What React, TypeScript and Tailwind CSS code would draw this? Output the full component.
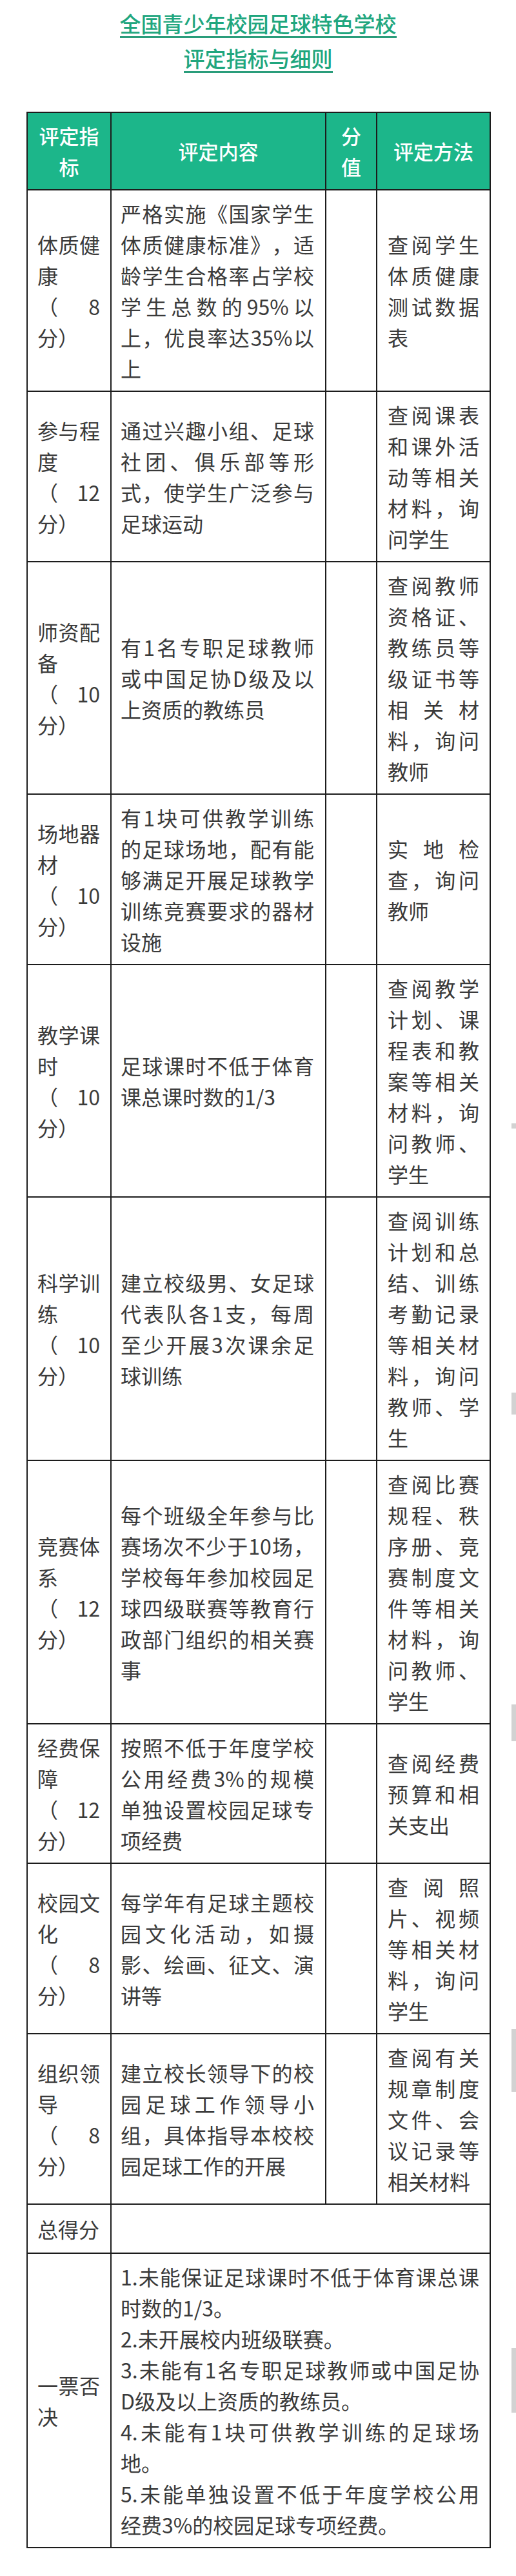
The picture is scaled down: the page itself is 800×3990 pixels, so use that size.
import React from "react";

type Row = { name: string; score: string; content: string; method: string };

const rows: Row[] = [
  {
    name: "体质健康",
    score: "（8分）",
    content: "严格实施《国家学生体质健康标准》，适龄学生合格率占学校学生总数的95%以上，优良率达35%以上",
    method: "查阅学生体质健康测试数据表",
  },
  {
    name: "参与程度",
    score: "（12分）",
    content: "通过兴趣小组、足球社团、俱乐部等形式，使学生广泛参与足球运动",
    method: "查阅课表和课外活动等相关材料，询问学生",
  },
  {
    name: "师资配备",
    score: "（10分）",
    content: "有1名专职足球教师或中国足协D级及以上资质的教练员",
    method: "查阅教师资格证、教练员等级证书等相关材料，询问教师",
  },
  {
    name: "场地器材",
    score: "（10分）",
    content: "有1块可供教学训练的足球场地，配有能够满足开展足球教学训练竞赛要求的器材设施",
    method: "实地检查，询问教师",
  },
  {
    name: "教学课时",
    score: "（10分）",
    content: "足球课时不低于体育课总课时数的1/3",
    method: "查阅教学计划、课程表和教案等相关材料，询问教师、学生",
  },
  {
    name: "科学训练",
    score: "（10分）",
    content: "建立校级男、女足球代表队各1支，每周至少开展3次课余足球训练",
    method: "查阅训练计划和总结、训练考勤记录等相关材料，询问教师、学生",
  },
  {
    name: "竞赛体系",
    score: "（12分）",
    content: "每个班级全年参与比赛场次不少于10场，学校每年参加校园足球四级联赛等教育行政部门组织的相关赛事",
    method: "查阅比赛规程、秩序册、竞赛制度文件等相关材料，询问教师、学生",
  },
  {
    name: "经费保障",
    score: "（12分）",
    content: "按照不低于年度学校公用经费3%的规模单独设置校园足球专项经费",
    method: "查阅经费预算和相关支出",
  },
  {
    name: "校园文化",
    score: "（8分）",
    content: "每学年有足球主题校园文化活动，如摄影、绘画、征文、演讲等",
    method: "查阅照片、视频等相关材料，询问学生",
  },
  {
    name: "组织领导",
    score: "（8分）",
    content: "建立校长领导下的校园足球工作领导小组，具体指导本校校园足球工作的开展",
    method: "查阅有关规章制度文件、会议记录等相关材料",
  },
];

// each item: [full (justified) line, remainder]
const veto: [string, string][] = [
  ["1.未能保证足球课时不低于体育课总课", "时数的1/3。"],
  ["", "2.未开展校内班级联赛。"],
  ["3.未能有1名专职足球教师或中国足协", "D级及以上资质的教练员。"],
  ["4.未能有1块可供教学训练的足球场", "地。"],
  ["5.未能单独设置不低于年度学校公用", "经费3%的校园足球专项经费。"],
];

const font = { fontFamily: '"Noto Sans CJK SC", "Noto Sans", sans-serif' };

const th =
  "border-2 border-[#1c1c1c] bg-[#1cb68a] text-white text-[31px] font-medium leading-[48px] text-center align-middle px-[13px] py-[11px]";
const td =
  "border-2 border-[#1c1c1c] text-[#3a3a3a] text-[32px] leading-[48px] text-justify align-middle py-[11px]";

export default function App() {
  return (
    <div className="relative w-[800px] h-[3990px] bg-white overflow-hidden [text-spacing-trim:space-all]" style={font}>
      <div className="flex flex-col items-center pt-[16px]">
        <div className="inline-block text-[33px] leading-[40px] font-medium text-[#20a67e] border-b-[3px] border-[#2a9d7b]">
          全国青少年校园足球特色学校
        </div>
        <div className="inline-block mt-[11px] text-[33px] leading-[40px] font-medium text-[#20a67e] border-b-[3px] border-[#2a9d7b]">
          评定指标与细则
        </div>
      </div>

      <div className="pl-[41px] mt-[60px]">
        <table className="table-fixed border-collapse w-[718px]">
          <colgroup>
            <col className="w-[130px]" />
            <col className="w-[333px]" />
            <col className="w-[79px]" />
            <col className="w-[176px]" />
          </colgroup>
          <thead>
            <tr>
              <th className={th}>评定指标</th>
              <th className={th}>评定内容</th>
              <th className={th}>分值</th>
              <th className={th}>评定方法</th>
            </tr>
          </thead>
          <tbody>
            {rows.map((r) => (
              <tr key={r.name}>
                <td className={`${td} pl-[15px] pr-[16px]`}>
                  {r.name}
                  <br />
                  {r.score}
                </td>
                <td className={`${td} pl-[14px] pr-[17px]`}>{r.content}</td>
                <td className={`${td} px-[13px]`}></td>
                <td className={`${td} px-[16px]`}>{r.method}</td>
              </tr>
            ))}
            <tr className="h-[76px]">
              <td className={`${td} pl-[15px] pr-[16px]`}>总得分</td>
              <td className={`${td} pl-[14px] pr-[16px]`} colSpan={3}></td>
            </tr>
            <tr>
              <td className={`${td} pl-[15px] pr-[16px]`}>一票否决</td>
              <td className={`${td} pl-[14px] pr-[16px]`} colSpan={3}>
                {veto.map(([full, rest]) => (
                  <div key={rest}>
                    {full && <div className="[text-align-last:justify]">{full}</div>}
                    <div>{rest}</div>
                  </div>
                ))}
              </td>
            </tr>
          </tbody>
        </table>
      </div>

      <div className="absolute right-0 top-[1740px] w-[7px] h-[8px] bg-[#d2d2d2]" />
      <div className="absolute right-0 top-[2157px] w-[7px] h-[34px] bg-[#d2d2d2]" />
      <div className="absolute right-0 top-[2640px] w-[7px] h-[57px] bg-[#d2d2d2]" />
      <div className="absolute right-0 top-[3143px] w-[7px] h-[97px] bg-[#d2d2d2]" />
      <div className="absolute right-0 top-[3637px] w-[7px] h-[100px] bg-[#d2d2d2]" />
    </div>
  );
}
